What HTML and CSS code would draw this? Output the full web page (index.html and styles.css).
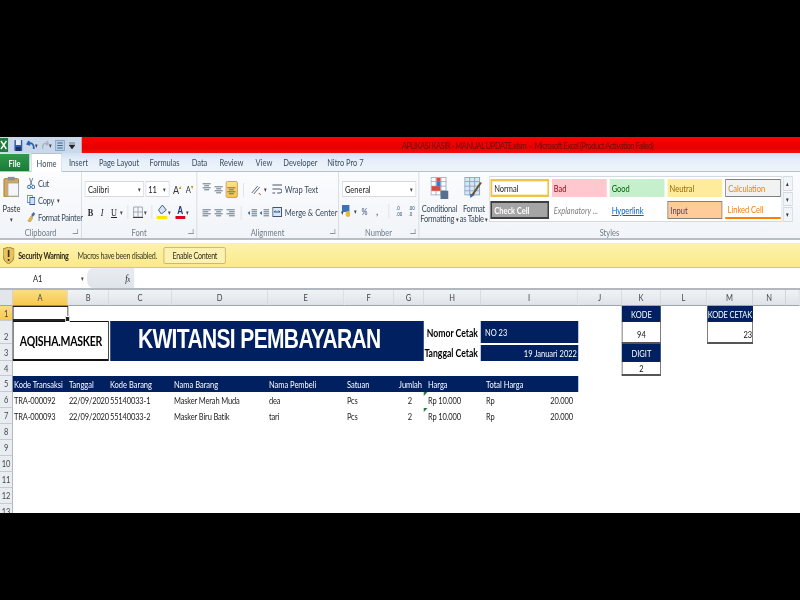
FILE: index.html
```html
<!DOCTYPE html>
<html lang="en">
<head>
<meta charset="utf-8">
<title>APLIKASI KASIR - MANUAL UPDATE.xlsm - Microsoft Excel</title>
<link rel="stylesheet" href="styles.css">
</head>
<body>
<svg class="defs" width="0" height="0" aria-hidden="true">
  <symbol id="lines-c" viewBox="0 0 12 10" preserveAspectRatio="none"><path d="M1 1h10M3 3.500h6M1 6h10M3 8.500h6" stroke="#44546a" fill="none"/></symbol>
  <symbol id="lines-l" viewBox="0 0 12 10" preserveAspectRatio="none"><path d="M1 1h10M1 3.500h7M1 6h10M1 8.500h7" stroke="#44546a" fill="none"/></symbol>
  <symbol id="lines-r" viewBox="0 0 12 10" preserveAspectRatio="none"><path d="M1 1h10M4 3.500h7M1 6h10M4 8.500h7" stroke="#44546a" fill="none"/></symbol>
  <symbol id="indent" viewBox="0 0 12 10" preserveAspectRatio="none"><path d="M5 1h7M5 3.500h7M5 6h7M5 8.500h7" stroke="#44546a" fill="none"/><path d="M0 5l3-2.500v5z" fill="#2a6fc0"/></symbol>
</svg>
<div class="frame">
<main class="window">
  <header class="titlebar">
    <div class="qat">
      <svg class="qi" width="11" height="14" viewBox="0 0 9 14" preserveAspectRatio="none"><rect width="9" height="14" fill="#1f7a3f"/><path d="M1 3l6 8M7 3l-6 8" stroke="#fff" stroke-width="1.500"/></svg>
      <svg class="qi q-save" width="11" height="11" viewBox="0 0 10 11" preserveAspectRatio="none"><rect width="10" height="11" rx="1" fill="#3359a8"/><rect x="2" width="6" height="5" fill="#e8eef8"/><rect x="2" y="7" width="6" height="4" fill="#1c2f66"/></svg>
      <svg class="qi q-undo" width="12" height="10" viewBox="0 0 9 10" preserveAspectRatio="none"><path d="M3 1L1 4l3 1M1.500 4C5 2 8 4 7.500 9" stroke="#2a5db0" stroke-width="1.800" fill="none"/></svg>
      <span class="caret">▾</span>
      <svg class="qi q-redo" width="10" height="10" viewBox="0 0 8 10" preserveAspectRatio="none"><path d="M6 1l2 3-3 1M7.500 4C4 2 1 4 1.500 9" stroke="#a9b3bf" stroke-width="1.500" fill="none"/></svg>
      <span class="caret">▾</span>
      <svg class="qi q-view" width="12" height="11" viewBox="0 0 10 11" preserveAspectRatio="none"><rect width="10" height="11" fill="#b9cde4" stroke="#5a7ea8"/><path d="M2 3h6M2 5.500h6M2 8h6" stroke="#38608f"/></svg>
      <svg class="qi q-more" width="8" height="7" viewBox="0 0 6 7" preserveAspectRatio="none"><path d="M0 1h6M0 3h6L3 7z" fill="#222" stroke="#222" stroke-width=".5"/></svg>
    </div>
    <div class="title">APLIKASI KASIR - MANUAL UPDATE.xlsm&nbsp; -&nbsp; Microsoft Excel (Product Activation Failed)</div>
  </header>

  <nav class="tabs">
    <span class="tab-file">File</span>
    <span class="tab-home">Home</span>
    <span class="t-insert">Insert</span>
    <span class="t-layout">Page Layout</span>
    <span class="t-formulas">Formulas</span>
    <span class="t-data">Data</span>
    <span class="t-review">Review</span>
    <span class="t-view">View</span>
    <span class="t-dev">Developer</span>
    <span class="t-nitro">Nitro Pro 7</span>
  </nav>

  <section class="ribbon">
    <div class="group g-clip">
      <div class="gbody clip-body">
        <div class="paste">
          <svg width="22" height="24" viewBox="0 0 17 24" preserveAspectRatio="none"><rect x="1" y="3" width="15" height="21" rx="1" fill="#d9a75c" stroke="#a07a3a"/><rect x="5" y="1" width="7" height="4" fill="#8b8f96"/><rect x="5" y="8" width="11" height="15" fill="#f4f6fa" stroke="#9aa6b5"/></svg>
          <span>Paste</span>
          <span class="caret">▾</span>
        </div>
        <div class="clip-list">
          <span class="clip-item"><svg width="11" height="11" viewBox="0 0 10 11" preserveAspectRatio="none"><path d="M3 0l3 7M7 0L4 7" stroke="#6d7a8a"/><circle cx="2.500" cy="9" r="1.800" fill="none" stroke="#2a5db0"/><circle cx="7.500" cy="9" r="1.800" fill="none" stroke="#2a5db0"/></svg>Cut</span>
          <span class="clip-item"><svg width="11" height="10" viewBox="0 0 10 10" preserveAspectRatio="none"><rect x=".5" y=".5" width="6" height="7" fill="#fff" stroke="#6f8db5"/><rect x="3.500" y="2.500" width="6" height="7" fill="#cfe0f4" stroke="#2a5db0"/></svg>Copy <span class="caret">▾</span></span>
          <span class="clip-item"><svg width="11" height="10" viewBox="0 0 10 10" preserveAspectRatio="none"><path d="M1 9l4-5 2 2-3 4z" fill="#e8b64c" stroke="#a47b1e" stroke-width=".5"/><path d="M5 3l3-3 2 2-3 3z" fill="#4a6fa5"/></svg>Format Painter</span>
        </div>
      </div>
      <div class="glabel"><span>Clipboard</span><i class="launch"></i></div>
    </div>

    <div class="group g-font">
      <div class="gbody stack">
        <div class="row">
          <span class="select s-font">Calibri<span class="caret">▾</span></span>
          <span class="select s-size">11<span class="caret">▾</span></span>
          <span class="grow">A<sup>▴</sup></span>
          <span class="shrink">A<sup>▾</sup></span>
        </div>
        <div class="row font-row">
          <b class="fmt">B</b><i class="fmt it">I</i><u class="fmt un">U</u><span class="caret">▾</span>
          <span class="sep"></span>
          <svg width="14" height="12" viewBox="0 0 12 12" preserveAspectRatio="none"><path d="M1 1h10v10H1zM6 1v10M1 6h10" stroke="#9aa3ad" fill="none"/><path d="M0 11.500h12" stroke="#333"/></svg><span class="caret">▾</span>
          <span class="sep"></span>
          <span class="bar-icon bar-y"><svg width="13" height="9" viewBox="0 0 10 9" preserveAspectRatio="none"><path d="M5 0L1 5l3 4 5-4z" fill="#d7e3f2" stroke="#44618a"/></svg></span><span class="caret">▾</span>
          <span class="bar-icon bar-r"><b class="acolor">A</b></span><span class="caret">▾</span>
        </div>
      </div>
      <div class="glabel"><span>Font</span><i class="launch"></i></div>
    </div>

    <div class="group g-align">
      <div class="gbody align-body">
        <div class="stack">
          <div class="row icons">
            <svg class="top" width="13" height="8"><use href="#lines-c" width="13" height="8"/></svg>
            <svg class="mid" width="13" height="8"><use href="#lines-c" width="13" height="8"/></svg>
            <span class="active"><svg class="low" width="13" height="8"><use href="#lines-c" width="13" height="8"/></svg></span>
            <span class="sep"></span>
            <svg width="16" height="11" viewBox="0 0 12 11" preserveAspectRatio="none"><path d="M2 9l6-7M4 10l6-7" stroke="#5c6b7d"/><path d="M9 9l2 2" stroke="#c33"/></svg><span class="caret">▾</span>
          </div>
          <div class="row icons">
            <svg width="13" height="8"><use href="#lines-l" width="13" height="8"/></svg>
            <svg width="13" height="8"><use href="#lines-c" width="13" height="8"/></svg>
            <svg class="right-a" width="13" height="8"><use href="#lines-r" width="13" height="8"/></svg>
            <span class="sep"></span>
            <svg width="13" height="8"><use href="#indent" width="13" height="8"/></svg>
            <svg width="13" height="8"><use href="#indent" width="13" height="8"/></svg>
          </div>
        </div>
        <div class="stack wrap-col">
          <span class="clip-item"><svg width="13" height="11" viewBox="0 0 10 11" preserveAspectRatio="none"><path d="M0 1h10M0 5h8q2 0 2 2t-2 2H5M0 9h3" stroke="#44546a" fill="none"/></svg>Wrap Text</span>
          <span class="clip-item"><svg width="13" height="10" viewBox="0 0 10 10" preserveAspectRatio="none"><rect x=".5" y=".5" width="9" height="9" fill="#dbe7f5" stroke="#44546a"/><path d="M2 5h6M2 5l1.500-1.500M8 5L6.500 3.500" stroke="#1d4f95"/></svg>Merge &amp; Center <span class="caret">▾</span></span>
        </div>
      </div>
      <div class="glabel"><span>Alignment</span><i class="launch"></i></div>
    </div>

    <div class="group g-num">
      <div class="gbody stack">
        <div class="row"><span class="select s-num">General<span class="caret">▾</span></span></div>
        <div class="row num-row">
          <svg width="16" height="12" viewBox="0 0 12 12" preserveAspectRatio="none"><rect width="10" height="7" fill="#3b72b8"/><circle cx="8" cy="9" r="3" fill="#e9b83e"/></svg><span class="caret">▾</span>
          <span class="num-sym">%</span><b class="num-sym">,</b>
          <span class="sep"></span>
          <span class="dec">.0<br>.00</span><span class="dec">.00<br>.0</span>
        </div>
      </div>
      <div class="glabel"><span>Number</span><i class="launch"></i></div>
    </div>

    <div class="group g-styles">
      <div class="gbody styles-body">
        <div class="big">
          <svg width="24" height="24" viewBox="0 0 18 24" preserveAspectRatio="none"><rect x=".5" y=".5" width="15" height="19" fill="#fff" stroke="#9db3cf"/><path d="M.5 5h15M.5 10h15M.5 15h15M5.500 0v20M10.500 0v20" stroke="#9db3cf"/><rect x="6" y="1" width="4" height="4" fill="#e0463c"/><rect x="1" y="10" width="9" height="5" fill="#e0463c"/><rect x="6" y="5" width="4" height="5" fill="#3c78d0"/><rect x="10" y="15" width="8" height="9" fill="#56708e"/></svg>
          <span>Conditional</span>
          <span>Formatting <span class="caret">▾</span></span>
        </div>
        <div class="big b2">
          <svg width="25" height="24" viewBox="0 0 19 24" preserveAspectRatio="none"><rect x=".5" y=".5" width="15" height="19" fill="#d8e6f5" stroke="#8ba7c8"/><path d="M.5 5h15M.5 10h15M.5 15h15M5.500 0v20M10.500 0v20" stroke="#8ba7c8"/><path d="M17 6L8 20" stroke="#6a5326" stroke-width="2"/><path d="M6 18l4 2-4 3z" fill="#3c63a5"/></svg>
          <span>Format</span>
          <span>as Table <span class="caret">▾</span></span>
        </div>
        <div class="gallery">
          <span class="st st-normal">Normal</span>
          <span class="st st-bad">Bad</span>
          <span class="st st-good">Good</span>
          <span class="st st-neutral">Neutral</span>
          <span class="st st-calc">Calculation</span>
          <span class="st st-check">Check Cell</span>
          <span class="st st-expl">Explanatory ...</span>
          <span class="st st-link">Hyperlink</span>
          <span class="st st-input">Input</span>
          <span class="st st-linked">Linked Cell</span>
        </div>
        <div class="gscroll"><span>▴</span><span>▾</span><span>▾</span></div>
      </div>
      <div class="glabel center"><span>Styles</span></div>
    </div>
  </section>

  <section class="secbar">
    <svg width="15" height="17" viewBox="0 0 11 17" preserveAspectRatio="none"><path d="M5.500 0L11 2v7q0 5-5.500 8Q0 14 0 9V2z" fill="#e9c25b" stroke="#8a7431" stroke-width=".8"/><path d="M5.500 3v7M5.500 12v2" stroke="#3c3320" stroke-width="1.600"/></svg>
    <b class="sec-title">Security Warning</b>
    <span class="sec-msg">Macros have been disabled.</span>
    <span class="sec-btn">Enable Content</span>
  </section>

  <section class="formula">
    <div class="namebox"><span>A1</span><span class="caret">▾</span></div>
    <div class="fxbox"><i class="fx">f<small>x</small></i></div>
    <div class="fxinput"></div>
  </section>

  <section class="sheet">
    <span class="corner"></span>
    <span class="ch sel">A</span><span class="ch">B</span><span class="ch">C</span><span class="ch">D</span><span class="ch">E</span><span class="ch">F</span><span class="ch">G</span><span class="ch">H</span><span class="ch">I</span><span class="ch">J</span><span class="ch">K</span><span class="ch">L</span><span class="ch">M</span><span class="ch">N</span><span class="ch"></span>

    <span class="rh r1 sel">1</span><span class="rh r2">2</span><span class="rh r3">3</span><span class="rh r4">4</span><span class="rh r5">5</span><span class="rh r6">6</span><span class="rh r7">7</span><span class="rh r8">8</span><span class="rh r9">9</span><span class="rh r10">10</span><span class="rh r11">11</span><span class="rh r12">12</span><span class="rh r13">13</span>

    <span class="a1"><i class="handle"></i></span>
    <span class="brand">AQISHA.MASKER</span>
    <span class="bigtitle">KWITANSI PEMBAYARAN</span>
    <span class="meta m1">Nomor Cetak</span>
    <span class="meta m2">Tanggal Cetak</span>
    <span class="metaval v1">NO 23</span>
    <span class="metaval v2">19 Januari 2022</span>

    <span class="head-bg"></span>
    <span class="c r5 ca th">Kode Transaksi</span>
    <span class="c r5 cb th">Tanggal</span>
    <span class="c r5 cc th">Kode Barang</span>
    <span class="c r5 cd th">Nama Barang</span>
    <span class="c r5 ce th">Nama Pembeli</span>
    <span class="c r5 cf th">Satuan</span>
    <span class="c r5 cg th">Jumlah</span>
    <span class="c r5 ch2 th">Harga</span>
    <span class="c r5 ci th">Total Harga</span>

    <span class="c r6 ca">TRA-000092</span>
    <span class="c r6 cb">22/09/2020</span>
    <span class="c r6 cc">55140033-1</span>
    <span class="c r6 cd">Masker Merah Muda</span>
    <span class="c r6 ce">dea</span>
    <span class="c r6 cf">Pcs</span>
    <span class="c r6 cg qty">2</span>
    <span class="c r6 ch2 flag">Rp 10.000</span>
    <span class="c r6 ci money"><span>Rp</span><span>20.000</span></span>

    <span class="c r7 ca">TRA-000093</span>
    <span class="c r7 cb">22/09/2020</span>
    <span class="c r7 cc">55140033-2</span>
    <span class="c r7 cd">Masker Biru Batik</span>
    <span class="c r7 ce">tari</span>
    <span class="c r7 cf">Pcs</span>
    <span class="c r7 cg qty">2</span>
    <span class="c r7 ch2 flag">Rp 10.000</span>
    <span class="c r7 ci money"><span>Rp</span><span>20.000</span></span>

    <span class="navy k-kode">KODE</span>
    <span class="box k-val">94</span>
    <span class="navy k-digit">DIGIT</span>
    <span class="box k-dval">2</span>
    <span class="navy m-kode">KODE CETAK</span>
    <span class="box m-val">23</span>
  </section>
</main>
</div>
</body>
</html>
```
FILE: styles.css
```css
/* The reference is a screenshot squeezed horizontally: the whole window is
   laid out 4/3 wider and scaled back, so text and icons get the same squeeze. */
* { box-sizing: border-box; }
html, body { margin: 0; height: 600px; background: #000; overflow: hidden; }
body {
  padding-top: 137px;
  font-family: Lato, "Liberation Sans", sans-serif;
  font-size: 10px;
  color: #333;
}
.defs { position: absolute; }
.frame { width: 800px; height: 376px; overflow: hidden; }
.window {
  width: 1066.600px;
  height: 376px;
  background: #fff;
  overflow: hidden;
  display: flex;
  flex-direction: column;
  transform: scaleX(0.75);
  transform-origin: 0 0;
  filter: blur(0.3px);
}
.caret { font-size: 7px; color: #444; line-height: 1; }

/* title bar */
.titlebar { height: 16px; display: flex; background: linear-gradient(#ff0000, #e60000 70%, #f41010); flex: none; }
.qat { width: 109.300px; flex: none; display: flex; align-items: center; background: #c9d8ea; overflow: hidden; }
.qat .qi { flex: none; }
.q-save { margin-left: 8px; }
.q-undo { margin-left: 5px; }
.q-redo { margin-left: 4px; }
.q-view { margin-left: 5px; }
.q-more { margin-left: 6px; }
.title { flex: 1; min-width: 0; padding-left: 426.700px; line-height: 16px; color: #6d0f0f; white-space: nowrap; letter-spacing: -0.62px; }

/* tabs */
.tabs {
  height: 19px; flex: none; display: flex; align-items: flex-end;
  background: linear-gradient(#cfe0f3, #e6eff9 40%, #eef4fb);
  border-bottom: 1px solid #b8c2cc;
  color: #3b4a5c;
  line-height: 18px;
  white-space: nowrap;
}
.tabs span { text-align: center; }
.tab-file { width: 38.700px; height: 17px; margin-right: 2.700px; background: linear-gradient(#2f9a4c, #1c7a38); color: #fff; font-weight: bold; }
.tab-home { width: 41.300px; height: 19px; background: #fff; margin-bottom: -1px; border: 1px solid #b8c2cc; border-bottom: 0; border-radius: 2px 2px 0 0; }
.t-insert { width: 44px; }
.t-layout { width: 64px; }
.t-formulas { width: 57.300px; }
.t-data { width: 36px; }
.t-review { width: 49.300px; }
.t-view { width: 37.300px; }
.t-dev { width: 60px; }
.t-nitro { width: 60px; }

/* ribbon */
.ribbon { height: 68px; flex: none; display: flex; background: linear-gradient(#fbfcfe, #f1f4f8); border-bottom: 2px solid #b9bec4; }
.group { display: flex; flex-direction: column; border-right: 1px solid #cfd5dc; flex: none; }
.g-clip { width: 109.300px; }
.g-font { width: 153.300px; }
.g-align { width: 189.300px; }
.g-num { width: 106.700px; }
.g-styles { flex: 1; min-width: 0; border-right: 0; }
.gbody { flex: 1; min-height: 0; }
.glabel { height: 15px; padding-top: 3px; flex: none; display: flex; justify-content: center; align-items: center; position: relative; color: #6f7b88; line-height: 12px; }
.launch { position: absolute; right: 4px; top: 6px; width: 7px; height: 5px; border-right: 1px solid #8b95a1; border-bottom: 1px solid #8b95a1; }
.clip-body { display: flex; gap: 9px; padding: 4px 0 0 4px; }
.paste { width: 22.700px; display: flex; flex-direction: column; align-items: center; gap: 3px; line-height: 10px; }
.paste span:first-of-type { margin-top: 3px; }
.clip-list { display: flex; flex-direction: column; gap: 5px; padding-top: 1px; letter-spacing: -0.4px; }
.clip-item { display: flex; align-items: center; gap: 4px; height: 12px; white-space: nowrap; color: #3b4a5c; }
.stack { display: flex; flex-direction: column; }
.g-font .stack { padding: 9px 0 0 4px; gap: 7px; }
.row { display: flex; align-items: center; height: 16px; }
.select { display: flex; align-items: center; justify-content: space-between; height: 16px; background: #fff; border: 1px solid #d5dae0; padding: 0 3px; color: #222; }
.s-font { width: 79px; }
.s-size { width: 32px; margin-left: 1.300px; }
.s-num { width: 98.700px; }
.grow { font-size: 12px; margin-left: 5px; color: #333; }
.shrink { font-size: 10px; margin-left: 6px; color: #333; }
sup { font-size: 6px; color: #d08a00; line-height: 0; }
.font-row { gap: 1px; }
.fmt { width: 14.700px; text-align: center; font-family: "Liberation Serif", serif; font-size: 11px; color: #223; }
.sep { width: 1px; height: 14px; background: #d7dce2; margin: 0 5px; }
.bar-icon { display: inline-flex; flex-direction: column; align-items: center; width: 13.300px; height: 14px; border-bottom: 3px solid; }
.bar-y { border-color: #ffe400; }
.bar-r { border-color: #e0001b; margin-left: 5px; }
.acolor { font-size: 11px; line-height: 11px; color: #1c3d85; font-family: "Liberation Sans", sans-serif; }
.align-body { display: flex; padding-top: 9px; }
.align-body > .stack:first-child { width: 100px; gap: 6px; padding-left: 6.700px; flex: none; }
.icons { gap: 2.700px; height: 17px; }
.active { display: inline-flex; align-items: flex-end; justify-content: center; padding-bottom: 2px; width: 16px; height: 17px; background: linear-gradient(#fde28e, #f7c34a); border: 1px solid #c49b3a; border-radius: 2px; }
.top { margin-top: -5px; }
.mid { margin-top: 1px; }
.wrap-col { gap: 11px; padding-top: 2px; }
.g-num .stack { padding: 9px 0 0 4px; gap: 6px; }
.num-row { gap: 4px; }
.num-sym { font-size: 10px; width: 17.300px; text-align: center; color: #2d4a78; }
.dec { font-size: 6px; line-height: 6px; color: #2d4a78; width: 17.300px; font-family: "Liberation Sans", sans-serif; }
.styles-body { display: flex; padding-top: 5px; }
.big { width: 54.700px; flex: none; display: flex; flex-direction: column; align-items: center; line-height: 10px; white-space: nowrap; color: #3b4a5c; letter-spacing: -0.3px; }
.big svg { margin-bottom: 4px; }
.b2 { width: 37.400px; }
.gallery {
  width: 390.700px; height: 46px; flex: none; margin-left: 1.300px; margin-top: -1px; padding: 2px 1.300px; display: grid;
  grid-template-columns: 77.300px 73.300px 73.300px 73.300px 73.300px; grid-template-rows: 18px 18px; gap: 4px 4px;
  background: #fff; border: 1px solid #d5dae0;
}
.st { display: flex; align-items: center; padding: 0 2.700px; color: #222; white-space: nowrap; overflow: hidden; }
.st-normal { border: 2px solid #f0c14b; box-shadow: 0 0 0 1px #fbeab8 inset; }
.st-bad { background: #ffc7ce; color: #9c0006; }
.st-good { background: #c6efce; color: #006100; }
.st-neutral { background: #ffeb9c; color: #9c6500; }
.st-calc { background: #f2f2f2; border: 1px solid #7f7f7f; color: #fa7d00; }
.st-check { background: #a5a5a5; border: 2px solid #3f3f3f; color: #fff; font-weight: bold; }
.st-expl { color: #7f7f7f; font-style: italic; }
.st-link { color: #0563c1; text-decoration: underline; }
.st-input { background: #ffcc99; border: 1px solid #7f7f7f; color: #3f3f76; }
.st-linked { color: #fa7d00; border-bottom: 2px solid #ff8001; }
.gscroll { width: 13.300px; height: 46px; margin-left: 1px; margin-top: -1px; display: flex; flex-direction: column; gap: 1px; flex: none; }
.gscroll span { flex: 1; display: flex; align-items: center; justify-content: center; font-size: 7px; background: #f1f4f8; border: 1px solid #d5dae0; color: #333; }

/* security bar */
.secbar {
  margin-top: 3px; height: 25px; flex: none; display: flex; align-items: center;
  padding-left: 4px; background: linear-gradient(#fdf2ae, #fbe98a); color: #3c3a2a; border-bottom: 1px solid #d8c77a;
  white-space: nowrap; font-size: 9.500px; letter-spacing: -0.35px;
}
.sec-title { margin-left: 5.300px; color: #2c2a1c; }
.sec-msg { margin-left: 12px; }
.sec-btn { margin-left: 9.300px; width: 82.700px; height: 17px; line-height: 15px; text-align: center; background: #fdf1b2; border: 1px solid #c6b26b; border-radius: 2px; color: #2c2a1c; }

/* formula bar */
.formula { height: 22px; flex: none; display: flex; background: #fff; border-bottom: 2px solid #b3b8be; }
.namebox { width: 116px; flex: none; display: flex; align-items: center; justify-content: space-between; padding: 0 4px 0 44px; color: #222; }
.fxbox { width: 62.700px; flex: none; display: flex; align-items: center; justify-content: flex-end; padding-right: 4px; background: linear-gradient(#e9edf2, #dfe4ea); border-radius: 8px 0 0 8px; border-right: 1px solid #b8c0c8; }
.fx { font-family: "Liberation Serif", serif; font-size: 11px; color: #222; }
.fx small { font-size: 8px; }
.fxinput { flex: 1; }

/* sheet */
.sheet {
  flex: 1; min-height: 0; overflow: hidden; display: grid; color: #1c1c1c;
  grid-template-columns: 17.300px 73.300px 54.700px 84px 128px 101.300px 66.700px 40px 76px 129.300px 58.700px 52px 61.300px 61.300px 44px 18.600px;
  grid-template-rows: 16px 15px 23px 17px 15px 16px 16px 16px 16px 16px 16px 16px 16px 16px;
  line-height: 16px;
}
.corner { background: #e2e6eb; border-bottom: 1px solid #9ea5ad; border-right: 1px solid #c4cad1; }
.ch { background: linear-gradient(#f0f3f6, #dfe3e8); border-right: 1px solid #c4cad1; border-bottom: 1px solid #9ea5ad; text-align: center; color: #444; line-height: 15px; }
.ch.sel { background: linear-gradient(#fcdc85, #f8c84e); border-bottom-color: #b88a20; }
.rh { grid-column: 1; background: #e9edf2; border-right: 1px solid #9ea5ad; border-bottom: 1px solid #c4cad1; text-align: center; color: #444; line-height: 15px; overflow: hidden; }
.rh.sel { background: linear-gradient(#fcdc85, #f8c84e); }
.rh.r1 { grid-row: 2; }
.rh.r2 { grid-row: 3; line-height: 30px; }
.rh.r3 { grid-row: 4; line-height: 17px; }
.rh.r4 { grid-row: 5; }
.rh.r5 { grid-row: 6; }
.rh.r6 { grid-row: 7; }
.rh.r7 { grid-row: 8; }
.rh.r8 { grid-row: 9; }
.rh.r9 { grid-row: 10; }
.rh.r10 { grid-row: 11; }
.rh.r11 { grid-row: 12; }
.rh.r12 { grid-row: 13; }
.rh.r13 { grid-row: 14; }
.a1 { grid-column: 2; grid-row: 2; border: 1px solid #222; border-bottom-width: 2px; position: relative; }
.handle { position: absolute; right: -3px; bottom: -3px; width: 4px; height: 4px; background: #222; border: 1px solid #fff; box-sizing: content-box; }
.brand { grid-column: 2 / 4; grid-row: 3 / 5; display: flex; align-items: center; justify-content: center; border: 1px solid #111; border-width: 1px 1px 2px 1px; font-size: 14px; letter-spacing: -0.3px; font-weight: bold; color: #000; background: #fff; white-space: nowrap; }
.bigtitle { grid-column: 4 / 9; grid-row: 3 / 5; margin-left: 1.300px; background: #002060; color: #fff; padding-left: 37.300px; white-space: nowrap; overflow: hidden; font-family: "Liberation Sans", sans-serif; font-weight: bold; font-size: 28px; line-height: 36px; letter-spacing: -0.85px; }
.meta { grid-column: 9; display: flex; align-items: center; justify-content: flex-end; padding-right: 4px; font-weight: bold; font-size: 11.500px; color: #000; white-space: nowrap; }
.m1 { grid-row: 3; }
.m2 { grid-row: 4; }
.metaval { grid-column: 10; background: #002060; color: #fff; display: flex; align-items: center; padding: 0 5.300px; white-space: nowrap; }
.v1 { grid-row: 3; margin-bottom: 1px; }
.v2 { grid-row: 4; margin-top: 1px; justify-content: flex-end; padding-right: 1.300px; }
.head-bg { grid-column: 2 / 11; grid-row: 6; background: #002060; }
.c { white-space: nowrap; padding-left: 1.300px; }
.c.r5 { grid-row: 6; }
.c.r6 { grid-row: 7; letter-spacing: -0.2px; }
.c.r7 { grid-row: 8; letter-spacing: -0.2px; }
.th { color: #fff; }
.ca { grid-column: 2; }
.cb { grid-column: 3; }
.cc { grid-column: 4; }
.cd { grid-column: 5; padding-left: 2.700px; }
.ce { grid-column: 6; }
.cf { grid-column: 7; padding-left: 4px; }
.cg { grid-column: 8; text-align: right; padding-right: 2.700px; }
.ch2 { grid-column: 9; padding-left: 5.300px; position: relative; }
.ci { grid-column: 10; padding-left: 6.700px; }
.c.qty { padding-right: 16px; }
.flag::before { content: ""; position: absolute; left: 0; top: 0; border-top: 4px solid #1d7f3b; border-right: 5px solid transparent; }
.money { display: flex; justify-content: space-between; padding-right: 6.700px; }
.navy { background: #002060; color: #fff; display: flex; align-items: center; justify-content: center; white-space: nowrap; overflow: hidden; }
.box { background: #fff; border: 1px solid #555; border-top-color: #222; border-bottom-width: 2px; display: flex; color: #111; }
.k-kode { grid-column: 12; grid-row: 2; }
.k-val { grid-column: 12; grid-row: 3; align-items: flex-end; justify-content: center; line-height: 15px; }
.k-digit { grid-column: 12; grid-row: 4; }
.k-dval { grid-column: 12; grid-row: 5; align-items: center; justify-content: center; }
.m-kode { grid-column: 14; grid-row: 2; letter-spacing: -0.2px; }
.m-val { grid-column: 14; grid-row: 3; align-items: flex-end; justify-content: flex-end; line-height: 15px; }
```
